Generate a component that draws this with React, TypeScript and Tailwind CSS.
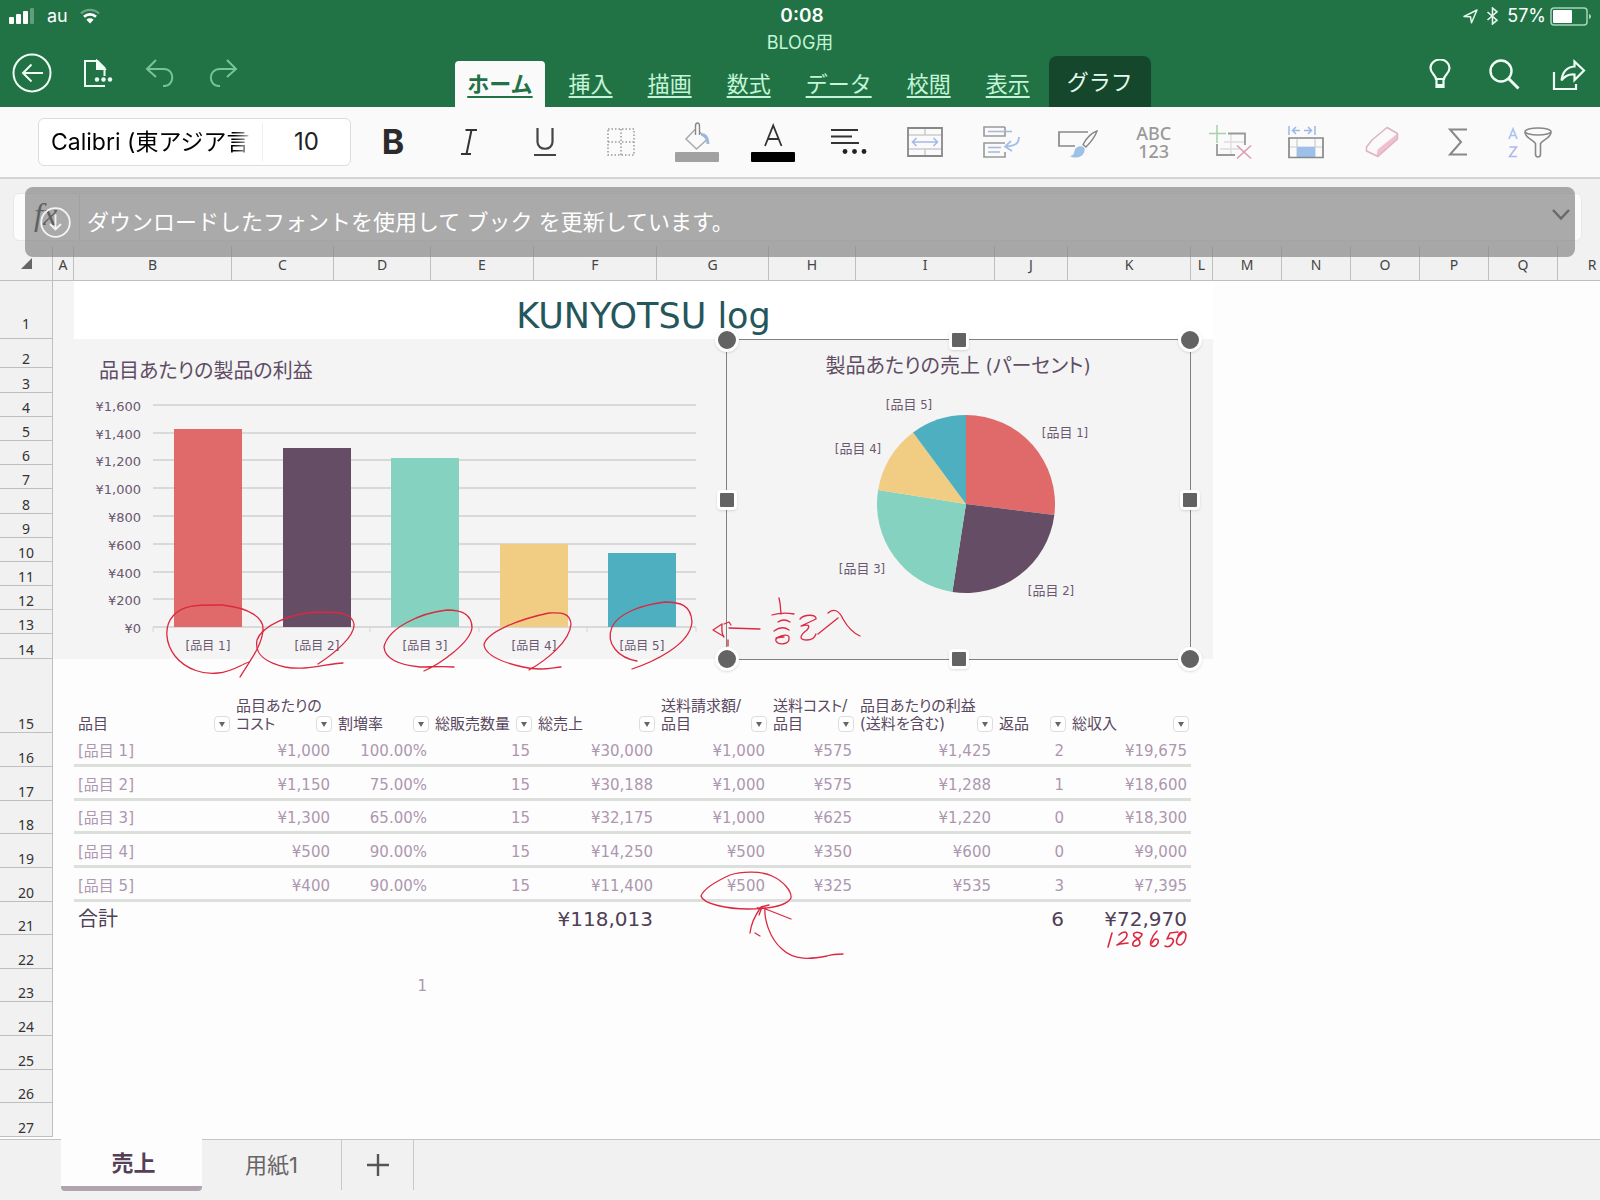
import React from 'react';

type Row = {
  label: string;
  cost: string;
  markup: string;
  sold: string;
  sales: string;
  shipFee: string;
  shipCost: string;
  profit: string;
  returns: string;
  income: string;
};

const columns: { name: string; width: number }[] = [
  { name: 'A', width: 21 },
  { name: 'B', width: 158 },
  { name: 'C', width: 102 },
  { name: 'D', width: 97 },
  { name: 'E', width: 103 },
  { name: 'F', width: 123 },
  { name: 'G', width: 112 },
  { name: 'H', width: 87 },
  { name: 'I', width: 139 },
  { name: 'J', width: 73 },
  { name: 'K', width: 123 },
  { name: 'L', width: 22 },
  { name: 'M', width: 69 },
  { name: 'N', width: 69 },
  { name: 'O', width: 69 },
  { name: 'P', width: 69 },
  { name: 'Q', width: 69 },
  { name: 'R', width: 69 },
];

const rowHeights = [
  58, 29, 25, 24, 24, 24, 24, 25, 24, 24, 24, 24, 24, 25, 74, 34, 34, 33, 34, 34, 33, 34, 33, 34, 34, 33, 34,
];

const headings: string[][] = [
  ['品目'],
  ['品目あたりの', 'コスト'],
  ['割増率'],
  ['総販売数量'],
  ['総売上'],
  ['送料請求額/', '品目'],
  ['送料コスト/', '品目'],
  ['品目あたりの利益', '(送料を含む)'],
  ['返品'],
  ['総収入'],
];

const rows: Row[] = [
  { label: '[品目 1]', cost: '¥1,000', markup: '100.00%', sold: '15', sales: '¥30,000', shipFee: '¥1,000', shipCost: '¥575', profit: '¥1,425', returns: '2', income: '¥19,675' },
  { label: '[品目 2]', cost: '¥1,150', markup: '75.00%', sold: '15', sales: '¥30,188', shipFee: '¥1,000', shipCost: '¥575', profit: '¥1,288', returns: '1', income: '¥18,600' },
  { label: '[品目 3]', cost: '¥1,300', markup: '65.00%', sold: '15', sales: '¥32,175', shipFee: '¥1,000', shipCost: '¥625', profit: '¥1,220', returns: '0', income: '¥18,300' },
  { label: '[品目 4]', cost: '¥500', markup: '90.00%', sold: '15', sales: '¥14,250', shipFee: '¥500', shipCost: '¥350', profit: '¥600', returns: '0', income: '¥9,000' },
  { label: '[品目 5]', cost: '¥400', markup: '90.00%', sold: '15', sales: '¥11,400', shipFee: '¥500', shipCost: '¥325', profit: '¥535', returns: '3', income: '¥7,395' },
];

const palette = ['#e06a6a', '#654d66', '#84d2bf', '#f1cd84', '#4dafc0'];

function StatusBar() {
  return (
    <div className="grid h-8 grid-cols-3 items-center pl-2 pr-2 text-white">
      <div className="flex items-center gap-3">
        <svg width="27" height="17" viewBox="0 0 27 17" fill="#fff" aria-hidden="true">
          <rect x="1" y="9" width="5" height="7" rx="1" />
          <rect x="8" y="6" width="5" height="10" rx="1" />
          <rect x="15" y="3" width="5" height="13" rx="1" />
          <rect x="22" y="0" width="4" height="16" rx="1" opacity=".3" />
        </svg>
        <span className="text-lg leading-6">au</span>
        <svg width="20" height="16" viewBox="0 0 20 16" fill="none" aria-hidden="true">
          <path d="M1 5.500a13 13 0 0 1 18 0" stroke="#fff" strokeOpacity=".35" strokeWidth="2.400" />
          <path d="M4 8.800a8.700 8.700 0 0 1 12 0" stroke="#fff" strokeWidth="2.600" />
          <path d="M10 15.500l-3.600-3.800a5.200 5.200 0 0 1 7.200 0z" fill="#fff" />
        </svg>
      </div>
      <div className="pl-1 text-center text-[19px] font-semibold leading-6">0:08</div>
      <div className="flex items-center justify-end">
        <svg className="mr-2" width="15" height="15" viewBox="0 0 15 15" fill="none" stroke="#e6f5ec" strokeWidth="1.500" strokeLinejoin="round" aria-hidden="true">
          <path d="M1 7.500L14 1L8.500 13.800L7.500 7.800z" />
        </svg>
        <svg className="mr-2" width="13" height="18" viewBox="0 0 13 18" fill="none" stroke="#e6f5ec" strokeWidth="1.600" aria-hidden="true">
          <path d="M1.500 5l9.500 8.200L6.500 17V1L11 4.800L1.500 13" />
        </svg>
        <span className="mr-1 text-lg leading-6">57%</span>
        <svg width="42" height="19" viewBox="0 0 42 19" fill="none" aria-hidden="true">
          <rect x="1" y="1" width="36" height="17" rx="3" stroke="#a9d3ba" strokeWidth="1.500" />
          <rect x="3" y="3" width="19" height="13" rx="1" fill="#fff" />
          <path d="M39 7v5c1.500-.6 2-1.500 2-2.500s-.5-1.900-2-2.500z" fill="#a9d3ba" />
        </svg>
      </div>
    </div>
  );
}

function RibbonTabs() {
  const tabs = ['挿入', '描画', '数式', 'データ', '校閲', '表示'];
  return (
    <div className="grid grid-cols-[1fr_auto_1fr] items-end pl-3 pr-1.5">
      <div className="flex h-[54px] items-start">
        <button aria-label="戻る" className="mr-[31px]">
          <svg width="40" height="40" viewBox="0 0 40 40" fill="none" stroke="#f0fff6" strokeWidth="2">
            <circle cx="20" cy="20" r="18.500" />
            <path d="M31 20H11M19.500 11.500L11 20l8.500 8.500" />
          </svg>
        </button>
        <button aria-label="ファイル" className="mr-8 mt-1.5">
          <svg width="30" height="29" viewBox="0 0 30 29" fill="none" stroke="#f0fff6" strokeWidth="2">
            <path d="M22 27H2V2h12.500l7 7v8" />
            <path d="M14 2v8h7.500z" fill="#f0fff6" />
            <g fill="#f0fff6" stroke="none">
              <circle cx="14" cy="20.500" r="2.200" />
              <circle cx="20.500" cy="20.500" r="2.200" />
              <circle cx="27" cy="20.500" r="2.200" />
            </g>
          </svg>
        </button>
        <button aria-label="元に戻す" className="mr-[34px] mt-1.5">
          <svg width="30" height="29" viewBox="0 0 30 29" fill="none" stroke="#78c498" strokeWidth="2">
            <path d="M11 1L2 10l9 8M2 10h17c11 0 11 17 0 17h-1" />
          </svg>
        </button>
        <button aria-label="やり直し" className="mt-1.5">
          <svg width="30" height="29" viewBox="0 0 30 29" fill="none" stroke="#78c498" strokeWidth="2">
            <path d="M18 1l9 9l-9 8M27 10H11C-1 10-1 27 10 27h1" />
          </svg>
        </button>
      </div>
      <nav className="flex items-end text-[22px] leading-7">
        <a href="#home" className="flex h-[46px] items-center rounded-t bg-[#fafafa] px-3 font-bold text-[#217346] underline decoration-2 underline-offset-4">
          ホーム
        </a>
        <div className="ml-6 mr-[19px] flex h-[46px] items-center gap-[35px]">
          {tabs.map((t) => (
            <a key={t} href={'#' + t} className="text-[#c3f5d6] underline decoration-2 underline-offset-4">
              {t}
            </a>
          ))}
        </div>
        <a href="#chart" className="flex h-[51px] items-center rounded-t-lg bg-[#14472b] px-[18px] text-[#e6fbef]">
          グラフ
        </a>
      </nav>
      <div className="flex h-[54px] items-start justify-end gap-8 pr-2 pt-1.5">
        <button aria-label="ヒント" className="mr-1">
          <svg width="24" height="30" viewBox="0 0 24 30" fill="none" stroke="#f0fff6" strokeWidth="2.200">
            <path d="M8 20c0-4-5.500-5.500-5.500-11a9.500 8.500 0 0 1 19 0c0 5.500-5.500 7-5.500 11z" />
            <path d="M8.500 20v8h7v-8" />
            <path d="M8 26.500h8" strokeWidth="3" />
          </svg>
        </button>
        <button aria-label="検索">
          <svg width="32" height="31" viewBox="0 0 32 31" fill="none" stroke="#f0fff6" strokeWidth="2.400">
            <circle cx="13" cy="12" r="10.500" />
            <path d="M20.500 19.500L30.500 29.500" strokeWidth="3" />
          </svg>
        </button>
        <button aria-label="共有">
          <svg width="34" height="32" viewBox="0 0 34 32" fill="none" stroke="#f0fff6" strokeWidth="2.200">
            <path d="M2 13v17h22v-5" />
            <path d="M22.500 2.500L32 11.500l-9.500 9.500v-5.500c-6-.5-10 1.500-13 6C10.500 13 14.500 8 22.500 7.500z" />
          </svg>
        </button>
      </div>
    </div>
  );
}

const toolIcons: { label: string; art: React.ReactNode }[] = [
  { label: '太字', art: <span className="text-[34px] font-bold leading-10 text-[#2b2b2b]">B</span> },
  {
    label: '斜体',
    art: (
      <svg width="20" height="28" viewBox="0 0 20 28" fill="none" stroke="#333" strokeWidth="2">
        <path d="M6.500 2H18M2 26h10M12.500 2l-5 24" />
      </svg>
    ),
  },
  {
    label: '下線',
    art: (
      <svg width="24" height="30" viewBox="0 0 24 30" fill="none" stroke="#444" strokeWidth="2.200">
        <path d="M4.500 1v14c0 9 15 9 15 0V1M1 28h22" />
      </svg>
    ),
  },
  {
    label: '罫線',
    art: (
      <svg width="28" height="28" viewBox="0 0 28 28" fill="none" stroke="#999" strokeWidth="1.500" strokeDasharray="1.500 2">
        <path d="M1 1h26v26H1zM14 1v26M1 14h26" />
      </svg>
    ),
  },
  {
    label: '塗りつぶしの色',
    art: (
      <svg width="44" height="40" viewBox="0 0 44 40" fill="none">
        <path d="M20 7.500L11 17l10.500 10L32 17.500L24.500 10" stroke="#aaa" strokeWidth="1.500" />
        <path d="M20.500 13V4c0-4 4-4 4 0v9" stroke="#888" strokeWidth="1.400" />
        <path d="M26 12.500c4-.5 7 3 7 9.500" stroke="#9db7de" strokeWidth="3" />
        <rect y="30" width="44" height="10" rx="1" fill="#a1a1a1" />
      </svg>
    ),
  },
  {
    label: 'フォントの色',
    art: (
      <svg width="44" height="40" viewBox="0 0 44 40" fill="none">
        <path d="M14 24l8.200-20.500L30.500 24M17 17h10.500" stroke="#333" strokeWidth="1.800" />
        <rect y="30" width="44" height="10" rx="1" fill="#000" />
      </svg>
    ),
  },
  {
    label: '配置',
    art: (
      <svg width="36" height="28" viewBox="0 0 36 28" fill="none" stroke="#333" strokeWidth="2">
        <path d="M0 2h27M0 8.500h21M0 15h28" />
        <g fill="#222" stroke="none">
          <circle cx="14" cy="23.500" r="2.400" />
          <circle cx="23.500" cy="23.500" r="2.400" />
          <circle cx="33" cy="23.500" r="2.400" />
        </g>
      </svg>
    ),
  },
  {
    label: 'セルの結合',
    art: (
      <svg width="36" height="30" viewBox="0 0 36 30" fill="none">
        <path d="M1 8h34M1 22h34M18 1v7M18 22v7" stroke="#ccc" strokeWidth="1.500" />
        <path d="M1 1h34v28H1z" stroke="#888" strokeWidth="1.800" />
        <path d="M6 15h24M9.500 11L5.500 15l4 4M26.500 11l4 4l-4 4" stroke="#a5b9e8" strokeWidth="1.600" />
      </svg>
    ),
  },
  {
    label: '折り返し',
    art: (
      <svg width="38" height="32" viewBox="0 0 38 32" fill="none">
        <path d="M22 1H1v9h21V1M22 17H1v14h21v-5" stroke="#999" strokeWidth="1.600" />
        <path d="M5 5.500h24M5 21.500h13M5 26h12" stroke="#a5b9d8" strokeWidth="1.500" />
        <path d="M36 11c0 6-3 9-13 9.500M28 15l-6 5.500l7 4.500" stroke="#a5bfe6" strokeWidth="1.800" />
      </svg>
    ),
  },
  {
    label: 'スタイル',
    art: (
      <svg width="40" height="32" viewBox="0 0 40 32" fill="none">
        <path d="M30 6H1v14h16" stroke="#888" strokeWidth="1.700" />
        <path d="M39 5c-6 2-11 8-14 13.500l3 2.500C32 17 37 11 39 5z" stroke="#888" strokeWidth="1.400" />
        <path d="M26.500 22c1 5-3 9.500-8 9.500c-3 0-5-.5-6.500-1.500c3-.5 4-2 4.500-5c.6-4 7-6.500 10-3z" fill="#9dc0e8" />
      </svg>
    ),
  },
  {
    label: '表示形式',
    art: (
      <span className="block font-['Noto_Sans',sans-serif] text-lg font-medium leading-[18px] text-[#999]">
        ABC
        <br />
        123
      </span>
    ),
  },
  {
    label: '挿入と削除',
    art: (
      <svg width="44" height="37" viewBox="0 0 44 37" fill="none">
        <path d="M23 10v20M16 18h20M12 25h20" stroke="#ddd" strokeWidth="1.300" />
        <path d="M20 9.500h17V21M9 20v11h18" stroke="#999" strokeWidth="1.800" />
        <path d="M9 1v18M1 9.500h17" stroke="#a8cfa8" strokeWidth="1.500" />
        <path d="M29 21.500l14 13M43 21.500l-14 13" stroke="#e09ab0" strokeWidth="1.600" />
      </svg>
    ),
  },
  {
    label: '列の幅',
    art: (
      <svg width="36" height="34" viewBox="0 0 36 34" fill="none">
        <path d="M1 1v9M27 1v9M4 5.500h8M16 5.500h8M8 2L4.500 5.500L8 9M20 2l3.500 3.500L20 9" stroke="#9db8e6" strokeWidth="1.500" />
        <path d="M9 14v18M27 14v18M1 22h34" stroke="#ccc" strokeWidth="1.200" />
        <rect x="9" y="22" width="18" height="10" fill="#9dc0ea" />
        <path d="M1 13h34v19.500H1z" stroke="#888" strokeWidth="1.700" />
      </svg>
    ),
  },
  {
    label: 'クリア',
    art: (
      <svg width="34" height="32" viewBox="0 0 34 32" fill="none" strokeLinejoin="round">
        <path d="M32.500 7.500v5.500L13 30.500l-1.500-1l1-6z" fill="#f0c0cf" />
        <path d="M1.500 21L7 14L22 1.500l10.500 6v5.500L13 30.500L1.500 25z" stroke="#dcb4c0" strokeWidth="1.500" />
      </svg>
    ),
  },
  {
    label: '合計',
    art: (
      <svg width="20" height="28" viewBox="0 0 20 28" fill="none" stroke="#888" strokeWidth="2">
        <path d="M19 1.500H2L13 14L2 26.500h17" />
      </svg>
    ),
  },
  {
    label: '並べ替えとフィルター',
    art: (
      <svg className="mr-2" width="44" height="33" viewBox="0 0 44 33" fill="none">
        <path d="M1 13l4-10l4 10M2.500 9.500h5" stroke="#a9c3ee" strokeWidth="1.600" />
        <path d="M1.500 21H8.500L1.500 30.500H9" stroke="#b3b5ee" strokeWidth="1.600" />
        <path d="M17 6c0 6 7 7 10.500 11.500V28c0 4 5 4 5 0V17.500C36 13 43 12 43 6" stroke="#888" strokeWidth="1.600" strokeLinejoin="round" />
        <ellipse cx="30" cy="5.500" rx="13" ry="3.500" stroke="#888" strokeWidth="1.500" />
      </svg>
    ),
  },
];

function Toolbar() {
  return (
    <div className="flex h-[72px] items-center gap-1 border-b-2 border-[#d4d4d4] bg-[#fafafa] pl-[38px] pr-7">
      <div className="flex h-12 w-[313px] shrink-0 rounded-md border border-[#dcdcdc] bg-white text-black">
        <button className="my-1 w-[224px] overflow-hidden whitespace-nowrap border-r border-[#eee] pl-3 pr-2 text-left text-[23px] leading-8">
          <span className="block overflow-hidden [mask-image:linear-gradient(to_right,black_90%,transparent)]">Calibri (東アジア言</span>
        </button>
        <button className="grow text-2xl leading-8 text-[#222]">10</button>
      </div>
      <div className="grid grow grid-cols-16">
        {toolIcons.map((t) => (
          <button key={t.label} aria-label={t.label} className="flex h-12 items-center justify-center">
            {t.art}
          </button>
        ))}
      </div>
    </div>
  );
}

function FormulaBar() {
  return (
    <div className="relative bg-[#f1f1f1] pb-[5px] pl-[13px] pr-[18px] pt-[14px]">
      <label className="flex h-12 items-center rounded-md border border-[#e8e8e8] bg-[#fcfcfc] pl-5 pr-[11px]">
        <span className="h-full w-[46px] border-r border-[#ddd] font-['Liberation_Serif',serif] text-[32px] italic leading-10 text-black">fx</span>
        <input aria-label="数式" className="h-full grow bg-transparent px-3 text-xl outline-none" />
        <svg className="mb-1" width="18" height="12" viewBox="0 0 18 12" fill="none" stroke="#222" strokeWidth="2.500" aria-hidden="true">
          <path d="M1 1l8 8.500L17 1" />
        </svg>
      </label>
      <div role="status" className="absolute left-[25px] right-[25px] top-2 z-20 flex h-[70px] items-center gap-4 rounded-lg bg-[#878787]/70 pl-[15px] text-[22px] leading-8 text-white">
        <svg width="31" height="31" viewBox="0 0 31 31" fill="none" stroke="#f4f4f4" strokeWidth="1.800" aria-hidden="true">
          <circle cx="15.500" cy="15.500" r="14.300" />
          <path d="M15.500 7.500v15M10 17l5.500 5.500L21 17" />
        </svg>
        <span>ダウンロードしたフォントを使用して ブック を更新しています。</span>
      </div>
    </div>
  );
}

function HeadingCell({ lines }: { lines: string[] }) {
  return (
    <th scope="col" className="pl-1 text-left align-bottom font-normal leading-[18px] text-[#5a4860]">
      <div className="flex items-end justify-between whitespace-nowrap pr-0.5">
        <span className="w-0">
          {lines.map((l) => (
            <span key={l} className="block">{l}</span>
          ))}
        </span>
        <button aria-label={lines.join('') + ' フィルター'} className="mb-px flex size-4 items-center justify-center rounded-sm border border-[#ddd] bg-white">
          <svg width="6" height="5" viewBox="0 0 6 5" fill="#666"><path d="M0 0h6L3 5z" /></svg>
        </button>
      </div>
    </th>
  );
}

function rowCells(n: number): React.ReactNode {
  if (n === 1) {
    return (
      <>
        <td className="bg-[#f4f4f4]" />
        <td colSpan={11} className="bg-white text-center align-bottom font-['DejaVu_Sans',sans-serif] text-[35px] leading-[46px] text-[#25565c]">
          KUNYOTSU log
        </td>
        <td colSpan={6} />
      </>
    );
  }
  if (n === 2) {
    return (
      <>
        <td rowSpan={13} colSpan={12} className="bg-[#f4f4f4]" />
        <td colSpan={6} />
      </>
    );
  }
  if (n < 15) return <td colSpan={6} />;
  if (n === 15) {
    return (
      <>
        <td />
        {headings.map((h) => (
          <HeadingCell key={h.join('')} lines={h} />
        ))}
        <td colSpan={7} />
      </>
    );
  }
  if (n < 21) {
    const r = rows[n - 16];
    const values = [r.cost, r.markup, r.sold, r.sales, r.shipFee, r.shipCost, r.profit, r.returns, r.income];
    return (
      <>
        <td />
        <td className="border-b-3 border-[#dcdfdc] pl-1 pt-1">{r.label}</td>
        {values.map((v, i) => (
          <td key={i} className="border-b-3 border-[#dcdfdc] pr-1 pt-1 text-right">{v}</td>
        ))}
        <td colSpan={7} />
      </>
    );
  }
  if (n === 21) {
    return (
      <>
        <td />
        <td className="pl-1 text-xl leading-6 text-[#4f4055]">合計</td>
        <td colSpan={4} className="pr-1 text-right text-xl leading-6 text-[#4f4055]">¥118,013</td>
        <td colSpan={3} />
        <td className="pr-1 text-right text-xl leading-6 text-[#4f4055]">6</td>
        <td className="pr-1 text-right text-xl leading-6 text-[#4f4055]">¥72,970</td>
        <td colSpan={7} />
      </>
    );
  }
  if (n === 23) {
    return (
      <>
        <td colSpan={4} className="pr-1 text-right">1</td>
        <td colSpan={14} />
      </>
    );
  }
  return <td colSpan={18} />;
}

function BarChart() {
  const values = [1425, 1288, 1220, 600, 535];
  const base = 287;
  const unit = 222 / 1600;
  return (
    <figure className="absolute left-[73px] top-[94px]" aria-label="品目あたりの製品の利益">
      <svg width="640" height="318" viewBox="0 0 640 318" className="font-['DejaVu_Sans','Noto_Sans_CJK_JP',sans-serif]" fill="#6a5870">
        <text x="26" y="38" fontSize="20" fill="#5f4d64" className="[font-feature-settings:'palt']">品目あたりの製品の利益</text>
        {[0, 200, 400, 600, 800, 1000, 1200, 1400, 1600].map((v) => (
          <g key={v}>
            <path d={`M80 ${Math.round(base - v * unit)}H623`} stroke="#d9d9d9" strokeWidth="2" />
            <text x="68" y={Math.round(base - v * unit) + 6} fontSize="13" textAnchor="end">{'¥' + v.toLocaleString('en-US')}</text>
          </g>
        ))}
        {[0, 1, 2, 3, 4, 5].map((i) => (
          <path key={i} d={`M${80 + Math.round(i * 108.6)} ${base}v5`} stroke="#d6d6d6" />
        ))}
        {values.map((v, i) => (
          <g key={i}>
            <rect x={101 + Math.round(i * 108.6)} y={Math.round(base - v * unit)} width="68" height={Math.round(v * unit)} fill={palette[i]} />
            <text x={135 + Math.round(i * 108.6)} y="310" fontSize="12" textAnchor="middle">{rows[i].label}</text>
          </g>
        ))}
      </svg>
    </figure>
  );
}

function PieChart() {
  const values = [19675, 18600, 18300, 9000, 7395];
  const total = values.reduce((a, b) => a + b, 0);
  const cx = 239;
  const cy = 164;
  const r = 89;
  let start = 0;
  const slices = values.map((v, i) => {
    const end = start + (v / total) * Math.PI * 2;
    const d = `M${cx} ${cy}L${cx + r * Math.sin(start)} ${cy - r * Math.cos(start)}A${r} ${r} 0 0 1 ${cx + r * Math.sin(end)} ${cy - r * Math.cos(end)}Z`;
    start = end;
    return <path key={i} d={d} fill={palette[i]} />;
  });
  const labels = [[338, 97], [324, 255], [135, 233], [131, 113], [182, 69]];
  return (
    <figure className="absolute left-[726px] top-[93px] h-[321px] w-[465px] border border-[#808080]" aria-label="製品あたりの売上 (パーセント)">
      <svg width="463" height="319" viewBox="0 0 463 319" className="font-['DejaVu_Sans_Condensed','DejaVu_Sans','Noto_Sans_CJK_JP',sans-serif]" fill="#6a5870">
        <text x="231" y="33" fontSize="20" textAnchor="middle" fill="#5f4d64" className="[font-feature-settings:'palt']">製品あたりの売上 (パーセント)</text>
        {slices}
        {labels.map(([x, y], i) => (
          <text key={i} x={x} y={y} fontSize="13" textAnchor="middle">{rows[i].label}</text>
        ))}
      </svg>
      <span className="absolute -left-3 -top-3 size-6 rounded-full border-3 border-white bg-[#636363] shadow" />
      <span className="absolute -right-3 -top-3 size-6 rounded-full border-3 border-white bg-[#636363] shadow" />
      <span className="absolute -bottom-3 -left-3 size-6 rounded-full border-3 border-white bg-[#636363] shadow" />
      <span className="absolute -bottom-3 -right-3 size-6 rounded-full border-3 border-white bg-[#636363] shadow" />
      <span className="absolute -top-2.5 left-1/2 size-5 -translate-x-1/2 rounded-sm border-3 border-white bg-[#636363] shadow" />
      <span className="absolute -bottom-2.5 left-1/2 size-5 -translate-x-1/2 rounded-sm border-3 border-white bg-[#636363] shadow" />
      <span className="absolute -left-2.5 top-1/2 size-5 -translate-y-1/2 rounded-sm border-3 border-white bg-[#636363] shadow" />
      <span className="absolute -right-2.5 top-1/2 size-5 -translate-y-1/2 rounded-sm border-3 border-white bg-[#636363] shadow" />
    </figure>
  );
}

function Ink() {
  return (
    <svg
      className="pointer-events-none absolute left-0 top-0 z-10"
      width="1600"
      height="800"
      viewBox="0 0 1600 800"
      fill="none"
      stroke="#dc2840"
      strokeLinecap="round"
      strokeLinejoin="round"
      strokeWidth="1.300"
      aria-hidden="true"
    >
      <path d="M173 370C182 358 200 359 222 359C250 362 264 372 263 384C262 400 249 416 240 431M173 370C164 380 165 397 175 410C186 424 205 429 218 427C232 426 240 419 249 416" />
      <path d="M318 418C335 407 355 390 354 378C352 367 340 366 318 366C290 367 262 380 257 394C254 410 268 417 285 421C305 425 325 418 343 417" />
      <path d="M424 425C440 418 470 397 472 382C472 367 460 364 447 364C420 367 388 382 384 401C385 414 400 419 420 421C432 421 443 420 454 421" />
      <path d="M529 424C545 415 570 396 571 378C570 365 558 367 549 367C520 373 486 386 484 399C486 411 505 417 523 421C540 425 550 422 561 421" />
      <path d="M632 423C650 417 690 400 692 376C691 359 680 356 665 356C640 359 618 368 612 381C605 398 619 412 637 415" />
      <path d="M722 378C722 384 721 387 724 391M722 378L713 384L723 390M724 378L729 376L731 379M729 382L760 383M728 394v6" />
      <path d="M779 352l1 5l1 11M772 369q10-3 22-1M778 376q6-4 12 0M774 385q8-6 15-1M776 392c8-4 14-4 13 1c0 5-10 7-13 2c-1-3 2-4 8-4" />
      <path d="M800 373c4-5 17-5 16 0l-15 7c7-2 10-1 6 4c-8 6-8 10 0 10c6 0 8-3 9-6M818 388l20-16M828 367c5-5 11-3 15 6c4 7 10 14 17 17" />
      <path d="M701 650C704 642 719 634 730 629C742 625 762 625 772 630C783 635 792 645 791 652C787 660 768 663 748 663C728 663 703 658 701 650Z" />
      <path d="M765 662C764 672 769 692 782 703C794 715 812 713 827 710C833 708 838 708 843 708M750 687C751 678 756 668 761 661L769 659M757 662L763 662L791 673M762 661l-3 8M755 687l5 3" />
      <path
        d="M1112 687L1108 701M1119 689c4-4 8-4 8 0c0 4-6 7-10 10c4-2 8-1 11-2M1142 688c-6-4-11 0-7 3c5 2 7 8 2 9c-6 1-5-4-1-6c3-2 6-3 6-6zM1157 685c-6 6-8 14-5 15c5 2 9-7 4-7c-2 0-3 2-4 4M1178 686l-8 1l-3 6c6-2 8 1 5 5c-2 3-5 3-7 2M1182 687c-7 5-7 12-2 12c5-1 8-11 4-13c-2-1-5 1-6 4"
        strokeWidth="1.600"
      />
    </svg>
  );
}

function Sheet() {
  return (
    <div className="relative grow overflow-hidden bg-[#fdfdfd]">
      <table className="w-[1626px] table-fixed border-separate border-spacing-0 font-['DejaVu_Sans','Noto_Sans_CJK_JP',sans-serif] text-[15px] leading-5 text-[#ad97b0] [font-feature-settings:'palt']">
        <colgroup>
          <col className="w-[53px]" />
          {columns.map((c) => (
            <col key={c.name} style={{ width: c.width }} />
          ))}
        </colgroup>
        <thead className="bg-[#f1f1f1] font-['Noto_Sans',sans-serif] text-sm text-[#444]">
          <tr className="h-[35px]">
            <th className="border-b border-r border-[#bfbfbf] pr-5">
              <svg className="ml-auto" width="11" height="11" viewBox="0 0 11 11" fill="#666" aria-hidden="true"><path d="M11 0v11H0z" /></svg>
            </th>
            {columns.map((c) => (
              <th key={c.name} scope="col" className="border-b border-r border-[#bfbfbf] pt-1 text-center font-normal">
                {c.name}
              </th>
            ))}
          </tr>
        </thead>
        <tbody>
          {rowHeights.map((h, i) => (
            <tr key={i} style={{ height: h }}>
              <th
                scope="row"
                className={
                  i === 0
                    ? "border-b border-r border-[#bfbfbf] bg-[#f1f1f1] pb-1.5 text-center align-bottom font-['Noto_Sans',sans-serif] text-sm font-normal leading-[17px] text-[#333]"
                    : "border-b border-r border-[#bfbfbf] bg-[#f1f1f1] text-center align-bottom font-['Noto_Sans',sans-serif] text-sm font-normal leading-[17px] text-[#333]"
                }
              >
                {i + 1}
              </th>
              {rowCells(i + 1)}
            </tr>
          ))}
        </tbody>
      </table>
      <BarChart />
      <PieChart />
      <Ink />
    </div>
  );
}

function SheetTabs() {
  return (
    <div className="flex h-[61px] shrink-0 items-start border-t border-[#c4c4c4] bg-[#f1f1f1] pl-[61px] text-[22px] leading-7">
      <button className="-mt-px h-[52px] w-[141px] rounded-b-sm border-b-5 border-[#b0a4b0] bg-[#fdfdfd] pl-1 font-bold text-[#553f59]">売上</button>
      <button className="h-[50px] w-[140px] border-r border-[#c8c8c8] text-[#666]">用紙1</button>
      <button aria-label="シートの追加" className="flex h-[50px] w-[72px] items-center justify-center border-r border-[#c8c8c8]">
        <svg width="22" height="22" viewBox="0 0 22 22" stroke="#555" strokeWidth="2.400" aria-hidden="true"><path d="M11 0v22M0 11h22" /></svg>
      </button>
    </div>
  );
}

export default function App() {
  return (
    <div className="flex min-h-screen flex-col bg-[#f1f1f1] font-['Inter','Noto_Sans_CJK_JP',sans-serif]">
      <header className="bg-[#217346]">
        <StatusBar />
        <div className="relative">
          <h1 className="absolute inset-x-0 top-0 text-center text-lg leading-[22px] text-[#c3f5d6]">BLOG用</h1>
          <div className="pt-[21px]">
            <RibbonTabs />
          </div>
        </div>
      </header>
      <Toolbar />
      <FormulaBar />
      <Sheet />
      <SheetTabs />
    </div>
  );
}
